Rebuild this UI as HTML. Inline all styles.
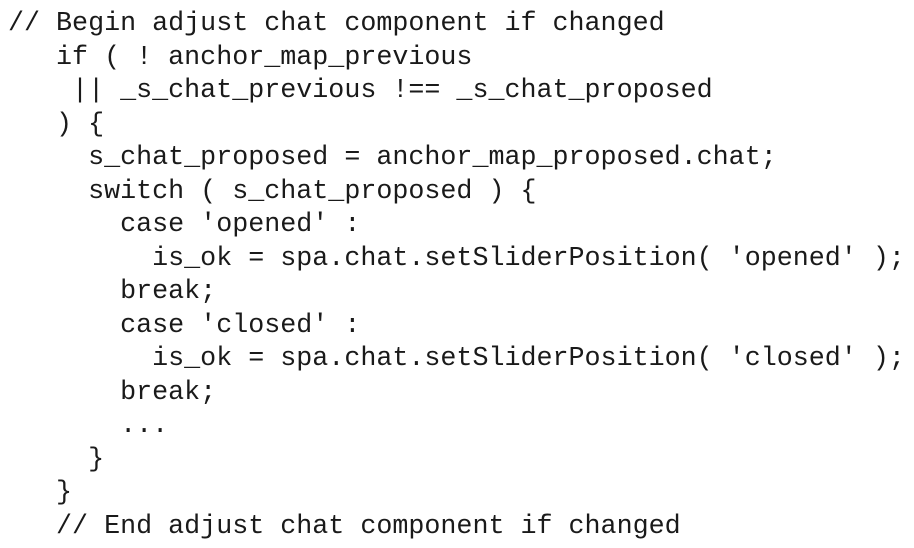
<!DOCTYPE html>
<html><head><meta charset="utf-8"><style>
html,body{margin:0;padding:0;background:#fff;width:914px;height:548px;overflow:hidden}
pre{margin:0;position:absolute;left:8px;top:8px;font-family:"Liberation Mono","Courier New",monospace;font-size:26.7px;line-height:33.5px;color:#1a1a1a}
</style></head><body><pre>// Begin adjust chat component if changed
   if ( ! anchor_map_previous
    || _s_chat_previous !== _s_chat_proposed
   ) {
     s_chat_proposed = anchor_map_proposed.chat;
     switch ( s_chat_proposed ) {
       case 'opened' :
         is_ok = spa.chat.setSliderPosition( 'opened' );
       break;
       case 'closed' :
         is_ok = spa.chat.setSliderPosition( 'closed' );
       break;
       ...
     }
   }
   // End adjust chat component if changed</pre></body></html>
